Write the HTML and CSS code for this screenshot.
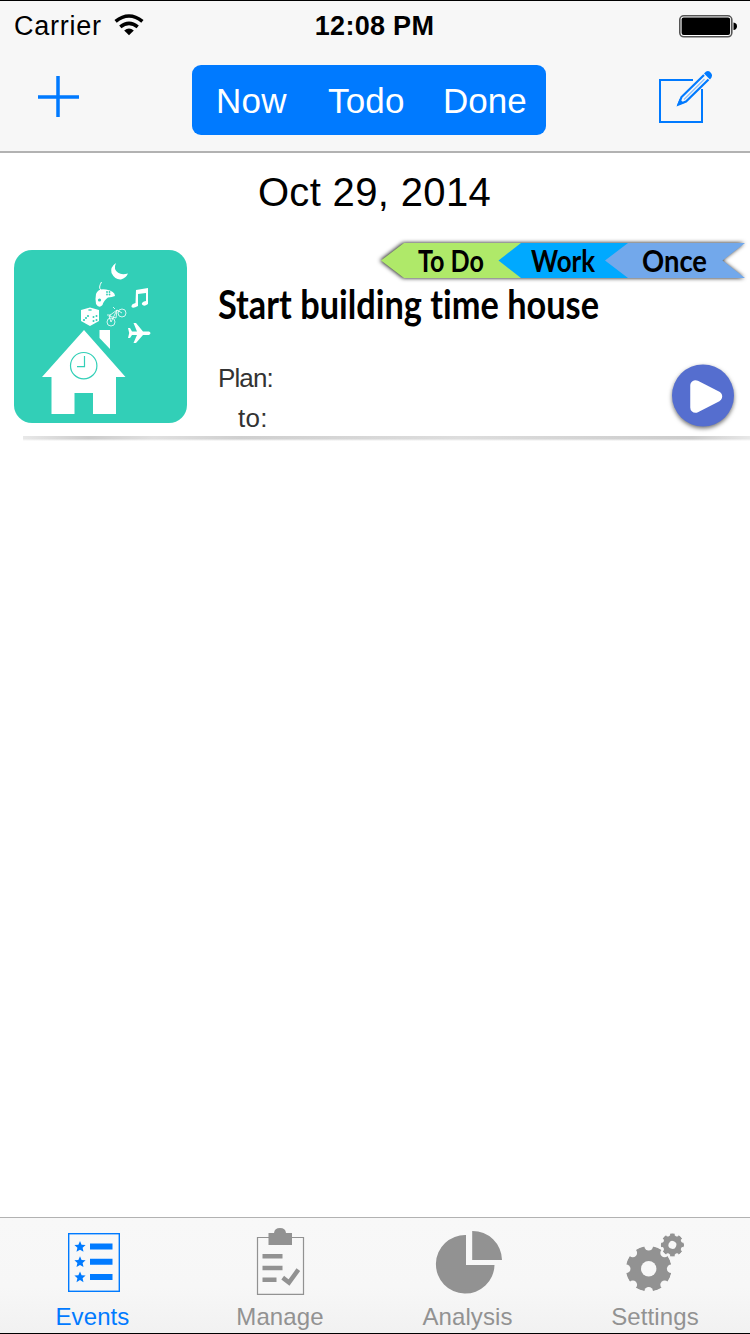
FILE: index.html
```html
<!DOCTYPE html>
<html lang="en">
<head>
<meta charset="utf-8">
<title>Events</title>
<link rel="stylesheet" href="styles.css">
</head>
<body>
<div class="screen">
  <header class="header">
    <div class="status">
      <div class="carrier"><span class="carrier-name">Carrier</span>
        <svg class="wifi" width="30" height="22" viewBox="0 0 30 22"><g fill="none" stroke="#000" stroke-width="3.6"><path d="M1.600 7.400Q15-3.400 28.400 7.400"/><path d="M6.300 12.800Q15 6 23.700 12.800"/></g><path d="M10.200 16.500Q15 12.500 19.800 16.500L15 21.300Z"/></svg>
      </div>
      <span class="time">12:08 PM</span>
      <svg class="battery" width="58" height="23" viewBox="0 0 58 23"><rect x=".8" y=".8" width="52" height="21" rx="4" fill="#fff" stroke="#555" stroke-width="1.6"/><rect x="2.600" y="2.500" width="48.500" height="17.600" rx="2" fill="#000"/><path d="M54.500 7.500Q58 8 58 11.300T54.500 15.100Z"/></svg>
    </div>
    <nav class="nav">
      <svg class="add" width="42" height="42" viewBox="0 0 42 42"><path d="M0 21H41M20 0V41" stroke="#007aff" stroke-width="3.500"/></svg>
      <div class="segments"><span class="now">Now</span><span class="todo">Todo</span><span class="done">Done</span></div>
      <svg class="compose" width="54" height="54" viewBox="659 70 54 54"><g fill="none" stroke="#007aff"><path d="M693 80H660V122H702V89" stroke-width="2"/><path d="M704 75L681.500 97L678.500 104.500L686 101.500L708.500 79.500" stroke-width="2.200"/><path d="M684 99.500L704.500 79" stroke-width="1.200" opacity=".45"/></g><path d="M677 105.500L679.500 99L684 103Z" fill="#007aff"/><path d="M704 73.500Q708 69 711 73Q713.500 76 710 79.500Z" fill="#007aff"/></svg>
    </nav>
  </header>
  <main class="content">
    <h1 class="date">Oct 29, 2014</h1>
    <article class="event">
      <svg class="thumb" width="173" height="173" viewBox="14 250 173 173">
        <rect x="14" y="250" width="173" height="173" rx="18" fill="#32cfb7"/>
        <g fill="#fff">
          <path d="M84 330L125.500 377H116V414H93V393H74.500V414H51.500V377H42Z"/>
          <path d="M99.500 330H110V349L99.500 338Z"/>
          <path d="M116 263Q110 267 111.500 273Q115 280 121 279.500Q126 278 128 273.500Q118 276 115 269Q114.500 266 116 263Z"/>
          <path d="M96 294Q98 288 106 289.500Q115 291 115 296Q112 297 108 297.500Q104 300 102.500 305Q99 309 96 304Q95 299 96 294Z"/>
          <path d="M81 310L90 307.500L99 310V321L90 326L81 321Z"/>
          <path d="M136 290L148 288V304Q144 307 142 304.500Q141 302 146 301V293L138 294V306Q133 309 131.500 307Q131 304 135.500 303Z"/>
          <path d="M128 328H130L132 331.500H137L133.500 323H136L143 331.500H149Q152 333 149 335H143L136 343H133.500L137 335H132L130 338H128L129.200 333Z"/>
        </g>
        <g fill="none" stroke="#fff"><path d="M101 290Q98 288 101.500 282" /><g stroke-width=".8"><circle cx="111" cy="322" r="4"/><circle cx="122" cy="313" r="4"/><path d="M111 322L109 316L117 310L122 313M109 316L116 318L117 310L111 322M115 309L113 307M107 315H111"/></g></g>
        <g fill="#32cfb7"><circle cx="99.500" cy="300" r="1.600"/><circle cx="107" cy="292" r=".9"/><circle cx="109.500" cy="292" r=".9"/><circle cx="107" cy="294.500" r=".9"/><circle cx="109.500" cy="294.500" r=".9"/><circle cx="84" cy="320" r="1.100"/><circle cx="86" cy="318" r="1.100"/><circle cx="88" cy="316" r="1.100"/><circle cx="93.500" cy="317" r="1"/><circle cx="96.500" cy="316" r="1"/><circle cx="93.500" cy="321" r="1"/><circle cx="96.500" cy="320" r="1"/><ellipse cx="90" cy="310" rx="2" ry=".8"/></g>
        <g fill="none" stroke="#32cfb7" stroke-width="1.200"><circle cx="83.700" cy="365.700" r="13.200"/><path d="M84.500 356V366.700H77"/></g>
      </svg>
      <div class="details">
        <svg class="tags" width="380" height="48" viewBox="370 236 380 48">
          <g class="tag-shape">
            <path d="M381 260.500L404 243H521V278H404Z" fill="#afe969"/>
            <path d="M498.500 260.500L521 243H628V278H521Z" fill="#00a9ff"/>
            <path d="M605 260.500L628 243H745L722.500 260.500L745 278H628Z" fill="#72a8eb"/>
          </g>
          <g class="hand tag-text">
            <text x="418" y="272" textLength="66" lengthAdjust="spacingAndGlyphs">To Do</text>
            <text x="531" y="272" textLength="64" lengthAdjust="spacingAndGlyphs">Work</text>
            <text x="642" y="272" textLength="65" lengthAdjust="spacingAndGlyphs">Once</text>
          </g>
        </svg>
        <svg class="title" width="420" height="62" viewBox="207 274 420 62"><text class="hand title-text" x="218" y="319" textLength="381" lengthAdjust="spacingAndGlyphs">Start building time house</text></svg>
        <div class="schedule">
          <div class="times"><div class="plan">Plan:</div><div class="to">to:</div></div>
          <svg class="play" width="76" height="76" viewBox="665 358 76 76"><circle class="play-disc" cx="703" cy="395.500" r="31" fill="#556ecf"/><path d="M695.500 385.500V407.500L717 396.500Z" fill="#fff" stroke="#fff" stroke-width="10.500" stroke-linejoin="round"/></svg>
        </div>
      </div>
    </article>
    <div class="separator"></div>
  </main>
  <nav class="tabs">
    <div class="tab active">
      <svg width="70" height="70" viewBox="58 1226 70 70"><rect x="68.700" y="1233.700" width="50.600" height="57.600" fill="none" stroke="#007aff" stroke-width="1.400"/><g fill="#007aff"><path d="M90 1243.500h22.500v6H90zm0 15.200h22.500v6H90zm0 15.300h22.500v6H90z"/><path id="star" d="M80 1241l1.600 3.800 4 .3-3 2.700.9 4-3.500-2.100-3.500 2.100.9-4-3-2.700 4-.3z"/><use href="#star" y="15.200"/><use href="#star" y="30.400"/></g></svg>
      <span>Events</span>
    </div>
    <div class="tab">
      <svg width="70" height="70" viewBox="245 1226 70 70"><path d="M257.500 1237.500H303.500V1294.300H257.500Z" fill="none" stroke="#929292" stroke-width="1.200"/><path d="M268.500 1233H274Q274.500 1228 280 1228T286 1233H292V1245H268.500Z" fill="#929292"/><path d="M262.500 1256.300H282.500M262.500 1268H282.500M262.500 1279.700H276.500" stroke="#929292" stroke-width="4.600"/><path d="M284.500 1279L289 1282.500L297 1271.500" fill="none" stroke="#929292" stroke-width="4.500" stroke-linecap="square"/></svg>
      <span>Manage</span>
    </div>
    <div class="tab">
      <svg width="70" height="70" viewBox="433 1226 70 70"><path d="M466 1235V1265H494.500A29.300 29.300 0 1 1 466 1235ZM472.200 1231A29.500 29.500 0 0 1 502 1260H472.200Z" fill="#929292"/></svg>
      <span>Analysis</span>
    </div>
    <div class="tab">
      <svg width="70" height="70" viewBox="620 1226 70 70">
        <defs>
          <mask id="large-cut" maskUnits="userSpaceOnUse" x="-30" y="-30" width="60" height="60"><circle r="22.800" fill="#fff"/><circle r="7.700"/><g id="notches"><circle cy="-22.500" r="4.300"/><circle cy="22.500" r="4.300"/><circle cx="22.500" r="4.300"/><circle cx="-22.500" r="4.300"/></g><use href="#notches" transform="rotate(45)"/></mask>
          <g id="gear"><circle r="23" fill="#929292" mask="url(#large-cut)"/></g>
        </defs>
        <use href="#gear" transform="translate(648.700 1268.800)"/><use href="#gear" transform="translate(672.400 1244.900) rotate(22.500) scale(.51)"/>
      </svg>
      <span>Settings</span>
    </div>
  </nav>
</div>
</body>
</html>
```
FILE: styles.css
```css
* { box-sizing: border-box; }
body { margin: 0; background: #fff; color: #000; font-family: "Liberation Sans", Arial, sans-serif; }
svg { display: block; flex: none; }
.screen { width: 750px; height: 1334px; display: flex; flex-direction: column; border-top: 1px solid #000; border-bottom: 1px solid #000; overflow: hidden; }
.header { height: 152px; flex: none; background: #f7f7f7; border-bottom: 2px solid #b2b2b2; }
.status { height: 50px; display: grid; grid-template-columns: 1fr auto 1fr; align-items: center; padding: 0 13px 0 14px; }
.carrier { display: flex; align-items: center; gap: 12px; }
.carrier-name { font-size: 27px; letter-spacing: .75px; }
.wifi { margin-top: -2px; }
.time { font-size: 27px; font-weight: 700; letter-spacing: .3px; margin-right: 2px; }
.battery { justify-self: end; }
.nav { height: 100px; display: grid; grid-template-columns: 154px 354px 1fr; padding: 14px 37px 0 38px; }
.add { margin-top: 11px; }
.segments { height: 70px; background: #007aff; border-radius: 9px; color: #fff; font-size: 35px; line-height: 71px; display: flex; padding-left: 24px; }
.now { width: 112px; letter-spacing: .3px; }
.todo { width: 115px; letter-spacing: .2px; }
.compose { margin-top: 5px; justify-self: end; }
.content { flex: 1; }
.date { margin: 0; padding: 16px 1px 0 0; height: 83px; text-align: center; font-size: 40px; font-weight: 400; line-height: 46px; letter-spacing: .35px; }
.event { display: flex; height: 200px; }
.thumb { margin: 14px 0 0 14px; }
.details { flex: 1; padding-left: 30px; }
.tags { margin-left: 153px; }
.tag-shape { filter: drop-shadow(-1px 0 2px rgba(0,0,0,.95)); }
.hand { font-family: Lato, sans-serif; font-weight: 700; font-variant-ligatures: none; }
.tag-text { font-size: 31px; }
.title { margin: -10px 0 -2px -10px; }
.title-text { font-size: 41px; }
.schedule { display: flex; justify-content: space-between; padding: 24px 9px 0 1px; }
.times { font-size: 26px; line-height: 40px; color: #333; letter-spacing: -.9px; }
.to { padding-left: 20px; letter-spacing: .3px; }
.play-disc { filter: drop-shadow(0 2px 2px rgba(0,0,0,.55)); }
.separator { height: 5px; margin-left: 23px; background: linear-gradient(rgba(255,255,255,0), rgba(255,255,255,0) 55%, #fff), linear-gradient(90deg, #e8e8e8, #ccc 9%, #e0e0e0 18%, #cfcfcf 30%, #ddd 60%, #ccc 92%, #e8e8e8); }
.tabs { height: 116px; flex: none; border-top: 1px solid #b2b2b2; background: linear-gradient(#f8f8f8, #f7f7f7 60%, #f1f1f1); display: grid; grid-template-columns: 185px 190px 185px 190px; padding-top: 8px; }
.tab { display: flex; flex-direction: column; align-items: center; color: #929292; font-size: 24px; line-height: 28px; gap: 7px; letter-spacing: .1px; }
.active { color: #007aff; }
```
